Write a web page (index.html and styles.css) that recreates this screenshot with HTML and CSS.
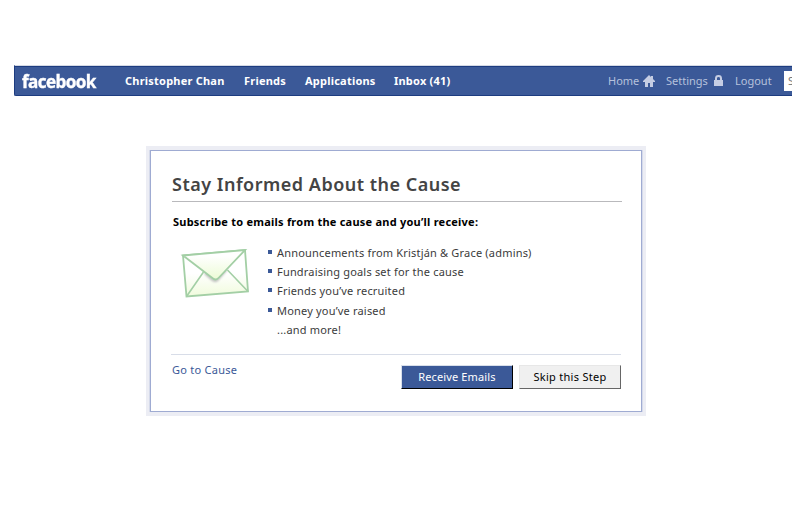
FILE: index.html
```html
<!DOCTYPE html>
<html lang="en">
<head>
<meta charset="utf-8">
<title>Facebook | Causes</title>
<link rel="stylesheet" href="styles.css">
</head>
<body>
<header class="topbar">
  <div class="logo"><span>facebook</span></div>
  <nav class="primary">
    <a class="name">Christopher Chan</a>
    <a class="friends">Friends</a>
    <a class="apps">Applications</a>
    <a class="inbox">Inbox (41)</a>
  </nav>
  <nav class="secondary">
    <a class="home">Home</a>
    <svg class="home-icon" width="12" height="12" viewBox="0 0 12 12"><path fill="currentColor" d="M6 0 8 2V1h2v3l2 2v1h-2v5H7V8H5v4H2V7H0V6z"/></svg>
    <a class="settings">Settings</a>
    <svg class="lock-icon" width="9" height="12" viewBox="0 0 9 12"><path fill="none" stroke="currentColor" stroke-width="2" d="M2 6V3.400Q2 1 4.500 1T7 3.400V6"/><path fill="currentColor" d="M0 5h9v6H0z"/></svg>
    <a class="logout">Logout</a>
  </nav>
  <div class="search">S</div>
</header>
<main class="frame">
  <section class="dialog">
    <h1>Stay Informed About the Cause</h1>
    <h2>Subscribe to emails from the cause and you’ll receive:</h2>
    <div class="content">
      <svg class="envelope" width="70" height="52" viewBox="0 0 70 52">
        <defs>
          <linearGradient id="flap" x1="0" y1="0" x2="0" y2="1"><stop offset=".2" stop-color="#fff"/><stop offset="1" stop-color="#ecfbd5"/></linearGradient>
          <linearGradient id="body" x1="0" y1="0" x2="0" y2="1"><stop offset=".5" stop-color="#fff"/><stop offset="1" stop-color="#f0fbdc"/></linearGradient>
          <filter id="soft" x="-20%" y="-20%" width="140%" height="150%"><feGaussianBlur stdDeviation="1.3"/></filter>
        </defs>
        <path d="M3 7.500 65 2 68 43.500 6.500 48.500z" fill="url(#body)" stroke="#a3cfa5" stroke-width="1.800"/>
        <path d="M6.500 48.500 23.500 24M68 43.500 47.500 22" fill="none" stroke="#a3cfa5" stroke-width="1.600"/>
        <path d="M25 25 33 32Q36 34 38 31L46 22" fill="none" stroke="#bbb" stroke-width="2.500" filter="url(#soft)"/>
        <path d="M3 7.500 33 30.500Q36 33 39 29.500L65 2z" fill="url(#flap)" stroke="#a3cfa5" stroke-width="1.800"/>
      </svg>
      <ul>
        <li>Announcements from Kristján &amp; Grace (admins)</li>
        <li>Fundraising goals set for the cause</li>
        <li>Friends you’ve recruited</li>
        <li>Money you’ve raised</li>
        <li class="more">...and more!</li>
      </ul>
    </div>
    <footer>
      <a class="go">Go to Cause</a>
      <div class="buttons">
        <button class="receive">Receive Emails</button>
        <button class="skip">Skip this Step</button>
      </div>
    </footer>
  </section>
</main>
</body>
</html>
```
FILE: styles.css
```css
* { box-sizing: border-box; }
body { margin: 0; padding-top: 65px; height: 518px; overflow: hidden; background: #fff; font: 11px/16px "Noto Sans", sans-serif; color: #3b3b3b; }
.topbar { display: flex; align-items: center; width: 778px; height: 31px; margin-left: 14px; background: #3b5998; border-top: 1px solid #d5dae5; border-bottom: 1px solid #1d3c80; border-left: 1px solid #1d3c80; box-shadow: inset 0 1px #1d3c80; border-bottom-left-radius: 2px; overflow: hidden; white-space: nowrap; }
.logo { flex: none; width: 110px; padding-left: 7px; color: #fff; font: 700 18px/22px "Open Sans", sans-serif; letter-spacing: -.6px; }
.logo span { display: inline-block; transform: scaleX(.95); transform-origin: left; -webkit-text-stroke: .4px #fff; }
.primary { display: flex; flex: none; color: #fff; font-weight: 700; letter-spacing: .22px; }
.name { width: 119px; }
.friends { width: 61px; }
.apps { width: 89px; }
.inbox { width: 214px; }
.secondary { display: flex; flex: none; align-items: center; color: #b6c1dc; }
.secondary svg { color: #c5cde3; }
.home { width: 35px; }
.home-icon { margin-right: 11px; }
.settings { width: 48px; }
.lock-icon { margin-right: 12px; }
.logout { width: 49px; }
.search { width: 8px; height: 20px; padding-left: 4px; background: #fff; color: #777; line-height: 20px; flex: none; }
.frame { width: 500px; height: 270px; margin: 50px 0 0 146px; padding: 4px; background: #ecedf4; }
.dialog { height: 262px; padding: 20px 19px 0 20px; background: #fff; border: 1px solid #9fabd2; box-shadow: -1px 0 #d5daea, 1px 0 #d5daea; white-space: nowrap; }
h1 { height: 31px; margin: 0 0 0 1px; border-bottom: 1px solid #b9b9bc; color: #444; font: 600 18px/27px "Noto Sans", sans-serif; letter-spacing: .5px; }
h2 { margin: 12px 0 0 2px; color: #000; font-size: 11px; line-height: 16px; letter-spacing: .23px; }
.content { display: flex; height: 124px; padding: 17px 0 0 9px; }
.envelope { flex: none; margin-top: 1px; }
ul { list-style: none; margin: -3px 0 0 18px; padding: 0; letter-spacing: .19px; }
li { height: 19.200px; line-height: 18px; padding-left: 9px; background: linear-gradient(#3b5998, #3b5998) 0 6px / 4px 4px no-repeat; }
.more { background: none; }
footer { display: flex; justify-content: space-between; margin-right: 1px; border-top: 1px solid #d8dde8; padding-top: 10px; }
.go { color: #3b5998; margin: -3px 0 0 1px; letter-spacing: .25px; }
.buttons { display: flex; gap: 6px; }
button { height: 24px; padding: 0; border: 1px solid; font: 11px/20px "Noto Sans", sans-serif; }
.receive { width: 112px; background: #3b5998; border-color: #d9dfea #000 #000 #d9dfea; color: #fff; letter-spacing: .13px; }
.skip { width: 102px; background: #f0f0f0; border-color: #e7e7e7 #666 #666 #e7e7e7; color: #000; letter-spacing: .28px; }
```
